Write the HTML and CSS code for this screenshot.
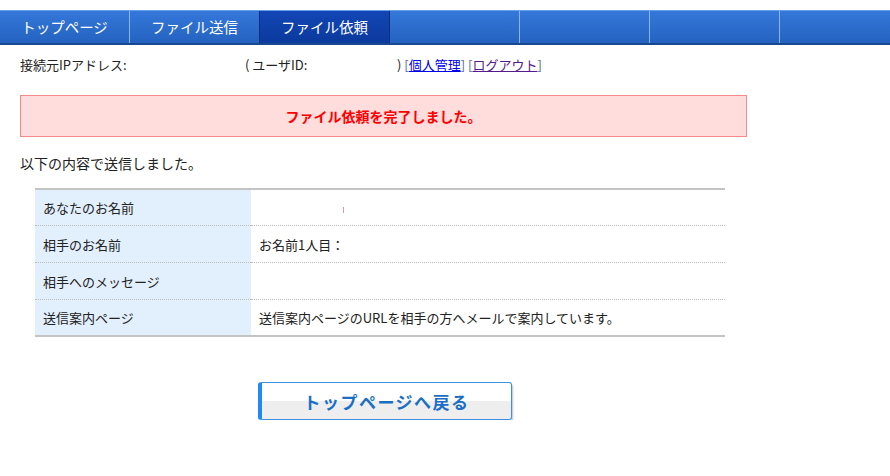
FILE: index.html
```html
<!DOCTYPE html>
<html>

<head>
    <meta charset="utf-8">
    <meta name="viewport" content="width=device-width, initial-scale=1">
    <title>ファイル依頼</title>
    <link rel="stylesheet" href="styles.css">
</head>

<body>
    <div class="nav">
        <a class="tab">トップページ</a>
        <a class="tab">ファイル送信</a>
        <a class="tab aktiv">ファイル依頼</a>
        <a class="tab"></a>
        <a class="tab"></a>
        <a class="tab"></a>
        <a class="tab"></a>
    </div>

    <div class="inhalt">
        <p class="kopf">
            <span class="ip">接続元IPアドレス:</span>
            <span class="uid">( ユーザID:</span>
            <span class="links">) <span class="klammer">[</span><a class="link" href="#">個人管理</a><span class="klammer">]</span>
                <span class="klammer">[</span><a class="link besucht" href="#">ログアウト</a><span class="klammer">]</span></span>
        </p>

        <div class="meldung">ファイル依頼を完了しました。</div>

        <p class="txt">以下の内容で送信しました。</p>

        <table class="tabelle">
            <tr class="rand">
                <th>あなたのお名前</th>
                <td><span class="strich"></span></td>
            </tr>
            <tr>
                <th>相手のお名前</th>
                <td>お名前1人目：</td>
            </tr>
            <tr>
                <th>相手へのメッセージ</th>
                <td></td>
            </tr>
            <tr class="rand">
                <th>送信案内ページ</th>
                <td>送信案内ページのURLを相手の方へメールで案内しています。</td>
            </tr>
        </table>

        <div class="knopfzeile">
            <button class="knopf">トップページへ戻る</button>
        </div>
    </div>
</body>

</html>
```

FILE: styles.css
```css
body {
    margin: 0;
    font-family: "Noto Sans CJK JP", "DejaVu Sans", sans-serif;
    font-size: 13px;
    color: #222;
    background: #fff;
}

/* Navigation oben */
.nav {
    display: flex;
    margin-top: 10px;
    height: 32px;
    border-top: 1px solid #6a9ee6;
    border-bottom: 2px solid #1a4790;
    background: linear-gradient(#3478da, #2462bf);
    overflow: hidden;
}

.tab {
    flex: 0 0 129px;
    border-right: 1px solid #8ab4ee;
    color: #fff;
    font-size: 14.5px;
    line-height: 32px;
    text-align: center;
}

.aktiv {
    background: linear-gradient(#1346b6, #0b3a9c);
    border-left: 1px solid #0a2f80;
    margin-left: -1px;
    border-right: 1px solid #0a2f80;
}

.inhalt {
    padding: 0 20px;
}

.kopf {
    display: flex;
    margin: 11px 0 0 0;
    line-height: 18px;
    color: #222;
}

.ip {
    width: 225px;
}

.uid {
    width: 152px;
}

.link {
    color: #0000ee;
}

.besucht {
    color: #551a8b;
}

.klammer {
    color: #556699;
}

.meldung {
    width: 725px;
    margin-top: 21px;
    height: 40px;
    line-height: 40px;
    border: 1px solid #f48a8a;
    background-color: #ffdddd;
    color: #ff0000;
    font-size: 14px;
    font-weight: bold;
    text-align: center;
}

.txt {
    font-size: 14px;
    margin: 16px 0 0 0;
    line-height: 20px;
}

.tabelle {
    margin: 15px 0 0 15px;
    width: 690px;
    border-collapse: collapse;
    border-top: 2px solid #c4c4c4;
    border-bottom: 2px solid #c4c4c4;
}

.tabelle th,
.tabelle td {
    height: 36px;
    padding: 0 8px;
    text-align: left;
    font-weight: normal;
    border-top: 1px dotted #bbbbbb;
}

.tabelle .rand th,
.tabelle .rand td {
    height: 35px;
}

.tabelle th {
    width: 200px;
    background-color: #e2effd;
}

.strich {
    display: inline-block;
    width: 1px;
    height: 6px;
    margin-left: 84px;
    background-color: #d9a0a0;
}

.knopfzeile {
    padding-left: 238px;
    margin-top: 45px;
}

.knopf {
    width: 254px;
    height: 38px;
    border: 1px solid #3d8fe0;
    border-left: 4px solid #1f8af2;
    border-radius: 3px;
    background: linear-gradient(#ffffff 50%, #eeeeee 50%);
    box-shadow: 1px 2px 2px #b8c4d0;
    color: #1a6fc4;
    font-family: "Noto Sans CJK JP", sans-serif;
    font-size: 17px;
    font-weight: bold;
    letter-spacing: 1.5px;
    cursor: pointer;
}
```
